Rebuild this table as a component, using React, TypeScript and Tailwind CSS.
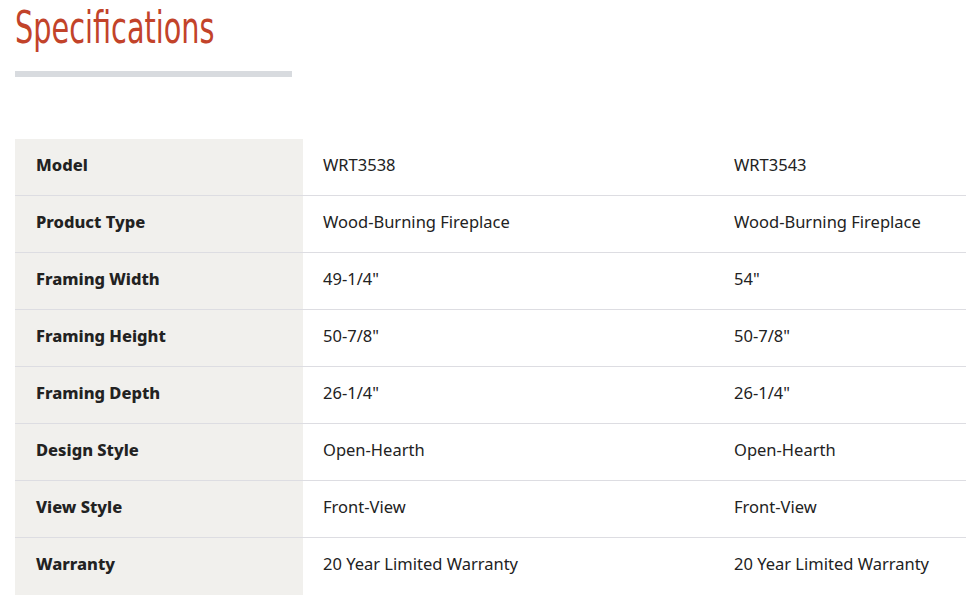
import React from 'react';

const specs: { label: string; a: string; b: string }[] = [
  { label: 'Model', a: 'WRT3538', b: 'WRT3543' },
  { label: 'Product Type', a: 'Wood-Burning Fireplace', b: 'Wood-Burning Fireplace' },
  { label: 'Framing Width', a: '49-1/4"', b: '54"' },
  { label: 'Framing Height', a: '50-7/8"', b: '50-7/8"' },
  { label: 'Framing Depth', a: '26-1/4"', b: '26-1/4"' },
  { label: 'Design Style', a: 'Open-Hearth', b: 'Open-Hearth' },
  { label: 'View Style', a: 'Front-View', b: 'Front-View' },
  { label: 'Warranty', a: '20 Year Limited Warranty', b: '20 Year Limited Warranty' },
];

const App: React.FC = () => {
  return (
    <div className="w-[966px] h-[610px] overflow-hidden bg-white font-['Noto_Sans',sans-serif] text-[#222]">
      <div className="pl-[15px]">
        {/* Heading */}
        <h1 className="pt-[2px] h-[55px] font-['DejaVu_Sans',sans-serif] font-stretch-condensed text-[45px] leading-[52px] text-[#c2432a] origin-left scale-x-[0.71] whitespace-nowrap">
          Specifications
        </h1>
        <div className="mt-[16px] w-[277px] h-[6px] bg-[#d8dbdf]" />

        {/* Table */}
        <div className="mt-[62px] w-[1110px]">
          {specs.map((row, i) => (
            <div
              key={row.label}
              className={`grid grid-cols-[288px_411px_411px] h-[57px] text-[16.5px] ${
                i < specs.length - 1 ? 'border-b border-[#dddde2]' : ''
              }`}
            >
              <div className="bg-[#f1f0ed] pl-[21px] pb-[4px] flex items-center font-extrabold">{row.label}</div>
              <div className="pl-[20px] pb-[4px] flex items-center">{row.a}</div>
              <div className="pl-[20px] pb-[4px] flex items-center">{row.b}</div>
            </div>
          ))}
        </div>
      </div>
    </div>
  );
};

export default App;
